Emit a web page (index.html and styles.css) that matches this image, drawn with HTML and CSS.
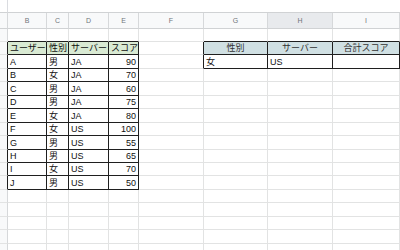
FILE: index.html
```html
<!DOCTYPE html>
<html>
	<head>
		<meta charset="utf-8">
		<title>スコア集計</title>
		<link rel="stylesheet" href="styles.css">
	</head>
	<body>
		<div id="sheet" class="sheet"></div>

		<script type="text/javascript">
			var letters = ["", "B", "C", "D", "E", "F", "G", "H", "I"];
			var rowCount = 17;

			var scores = [
				["A", "男", "JA", 90],
				["B", "女", "JA", 70],
				["C", "男", "JA", 60],
				["D", "男", "JA", 75],
				["E", "女", "JA", 80],
				["F", "女", "US", 100],
				["G", "男", "US", 55],
				["H", "男", "US", 65],
				["I", "女", "US", 70],
				["J", "男", "US", 50]
			];

			// grid[row][col] = { text, cls }
			var grid = [];
			for(var r = 1; r <= rowCount; r++) {
				grid[r] = [];
				for(var c = 0; c < letters.length; c++)
					grid[r][c] = { text: "", cls: [] };
			}

			function put(r, c, text, cls) {
				grid[r][c].text = text;
				if(cls)
					grid[r][c].cls.push(cls);
			}

			// black outline round a block of cells
			function box(r0, c0, r1, c1) {
				for(var r = r0; r <= r1; r++) {
					for(var c = c0; c <= c1; c++)
						grid[r][c].cls.push("br", "bb");
					grid[r][c0 - 1].cls.push("br");
				}
				for(var c = c0; c <= c1; c++)
					grid[r0 - 1][c].cls.push("bb");
			}

			// score list
			var heads = ["ユーザー", "性別", "サーバー", "スコア"];
			for(var i = 0; i < heads.length; i++)
				put(2, i + 1, heads[i], "green");
			for(var i = 0; i < scores.length; i++) {
				put(i + 3, 1, scores[i][0]);
				put(i + 3, 2, scores[i][1]);
				put(i + 3, 3, scores[i][2]);
				put(i + 3, 4, scores[i][3], "num");
			}
			box(2, 1, 12, 4);

			// lookup block
			put(2, 6, "性別", "blue");
			put(2, 7, "サーバー", "blue");
			put(2, 8, "合計スコア", "blue");
			put(3, 6, "女");
			put(3, 7, "US");
			box(2, 6, 3, 8);

			var html = "";
			html += '<div class="cell strip-corner"></div>';
			html += '<div class="strip"></div>';
			for(var c = 0; c < letters.length; c++) {
				var cls = "cell colhead";
				if(letters[c] == "H")
					cls += " active";
				html += '<div class="' + cls + '">' + letters[c] + '</div>';
			}
			for(var r = 1; r <= rowCount; r++) {
				for(var c = 0; c < letters.length; c++) {
					var cell = grid[r][c];
					var cls = "cell" + (c == 0 ? " rownum" : "");
					if(cell.cls.length)
						cls += " " + cell.cls.join(" ");
					html += '<div class="' + cls + '">' + cell.text + '</div>';
				}
			}
			document.getElementById("sheet").innerHTML = html;
		</script>
	</body>
</html>
```

FILE: styles.css
```css
html, body {
	margin: 0;
	overflow: hidden;
	background: #fff;
}

.sheet {
	display: grid;
	grid-template-columns: 8px 39px 22px 40px 30px 65px 64px 65px 67px;
	grid-template-rows: 13px 16px 13px;
	grid-auto-rows: 13.45px;
	font-family: "Liberation Sans", "Noto Sans CJK JP", sans-serif;
	font-size: 9px;
	color: #111;
	width: 400px;
}

.cell {
	box-sizing: border-box;
	display: flex;
	align-items: flex-end;
	padding: 0 2px 1px 2px;
	line-height: 1;
	white-space: nowrap;
	overflow: hidden;
	border-right: 1px solid #e2e3e3;
	border-bottom: 1px solid #e2e3e3;
}

.strip-corner {
	border-right: 1px solid #dadce0;
	border-bottom: 1px solid #d0d2d4;
}

.strip {
	grid-column: 2 / -1;
	border-bottom: 1px solid #d0d2d4;
}

.colhead {
	background: #f8f9fa;
	color: #70757a;
	font-size: 7px;
	justify-content: center;
	align-items: center;
	padding: 0;
	border-right-color: #d6d8da;
	border-bottom-color: #d0d2d4;
}

.colhead.active {
	background: #e8eaed;
}

.rownum {
	background: #f8f9fa;
	border-right-color: #d6d8da;
}

.num {
	justify-content: flex-end;
}

.green {
	background: #d9ead3;
}

.blue {
	background: #d0e0e3;
	justify-content: center;
	color: #333;
}

.br {
	border-right-color: #1f1f1f;
}

.bb {
	border-bottom-color: #1f1f1f;
}
```
